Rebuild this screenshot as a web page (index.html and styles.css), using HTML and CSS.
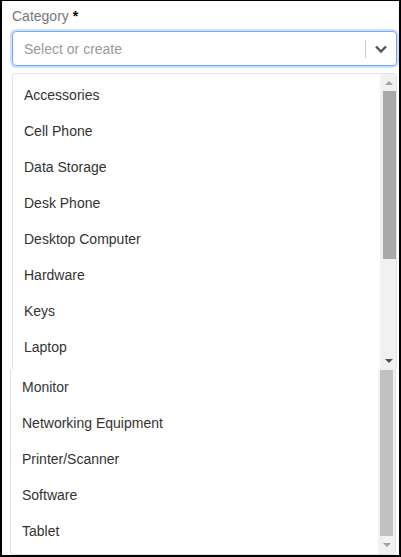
FILE: index.html
```html
<!DOCTYPE html>
<html>
<head>
<meta charset="utf-8">
<link rel="stylesheet" href="styles.css">
</head>
<body>
<div class="frame">
  <div class="label">Category <span class="req">*</span></div>
  <div class="select">
    <span class="placeholder">Select or create</span>
    <span class="sep"></span>
    <svg class="chev" width="14" height="10" viewBox="0 0 14 10"><path d="M2 2.5 L7 7.5 L12 2.5" fill="none" stroke="#555" stroke-width="2.4"/></svg>
  </div>
  <div class="menu menu-top">
    <ul class="list">
      <li>Accessories</li>
      <li>Cell Phone</li>
      <li>Data Storage</li>
      <li>Desk Phone</li>
      <li>Desktop Computer</li>
      <li>Hardware</li>
      <li>Keys</li>
      <li>Laptop</li>
    </ul>
    <div class="sbar sbar-top">
      <div class="arrow"><span class="tri up light"></span></div>
      <div class="thumb dark"></div>
      <div class="track"></div>
      <div class="arrow"><span class="tri down darkt"></span></div>
    </div>
  </div>
  <div class="menu menu-bottom">
    <ul class="list list2">
      <li>Monitor</li>
      <li>Networking Equipment</li>
      <li>Printer/Scanner</li>
      <li>Software</li>
      <li>Tablet</li>
    </ul>
    <div class="sbar sbar-bottom">
      <div class="thumb lightthumb"></div>
      <div class="arrow"><span class="tri down light"></span></div>
    </div>
  </div>
</div>
</body>
</html>
```
FILE: styles.css
```css
html, body {
  margin: 0;
  padding: 0;
  background: #fff;
}
.frame {
  width: 401px;
  height: 557px;
  box-sizing: border-box;
  border-top: 1px solid #000;
  border-left: 2px solid #000;
  border-right: 2px solid #000;
  border-bottom: 2px solid #000;
  padding: 7px 0 0 10px;
  font-family: "Liberation Sans", Arial, sans-serif;
  font-size: 14px;
  color: #333;
  display: flex;
  flex-direction: column;
  overflow: hidden;
}
.label {
  height: 17px;
  line-height: 17px;
  color: #777;
  font-size: 14px;
}
.req {
  color: #000;
  font-weight: bold;
}
.select {
  margin-top: 6px;
  width: 385px;
  height: 35px;
  box-sizing: border-box;
  border: 1px solid #6fa8f5;
  border-radius: 4px;
  box-shadow: 0 0 0 2px #cfe1fb;
  display: flex;
  align-items: center;
  padding-left: 11px;
}
.placeholder {
  flex: 1;
  color: #999;
}
.sep {
  width: 1px;
  height: 18px;
  background: #ccc;
}
.chev {
  margin: 0 8px 0 8px;
}
.menu {
  display: flex;
  box-sizing: border-box;
  background: #fff;
}
.menu-top {
  margin-top: 7px;
  width: 385px;
  height: 296px;
  border: 1px solid #e2e2e2;
  border-bottom: none;
  border-radius: 4px 4px 0 0;
}
.menu-bottom {
  margin-left: -2px;
  width: 386px;
  height: 186px;
  border: 1px solid #e2e2e2;
  border-top: none;
  border-radius: 0 0 4px 4px;
}
.list {
  list-style: none;
  margin: 0;
  padding: 3px 0 0 0;
  flex: 1;
}
.list2 {
  padding-top: 0;
}
.list li {
  height: 36px;
  line-height: 36px;
  padding-left: 11px;
  color: #333;
}
.sbar {
  display: flex;
  flex-direction: column;
  background: #f1f1f1;
}
.sbar-top {
  width: 15px;
  padding: 0 0 0 1px;
}
.sbar-bottom {
  width: 17px;
  padding: 1px 0 0 0;
}
.arrow {
  height: 17px;
  display: flex;
  align-items: center;
  justify-content: center;
}
.thumb.dark {
  height: 168px;
  margin: 0 0 0 2px;
  background: #a8a8a8;
}
.thumb.lightthumb {
  height: 166px;
  margin: 0 2px 0 2px;
  background: #c1c1c1;
}
.track {
  flex: 1;
}
.tri {
  width: 0;
  height: 0;
  border-left: 4px solid transparent;
  border-right: 4px solid transparent;
}
.tri.up.light {
  border-bottom: 4px solid #a3a3a3;
}
.tri.down.darkt {
  border-top: 4px solid #505050;
}
.tri.down.light {
  border-top: 4px solid #a3a3a3;
}
```
